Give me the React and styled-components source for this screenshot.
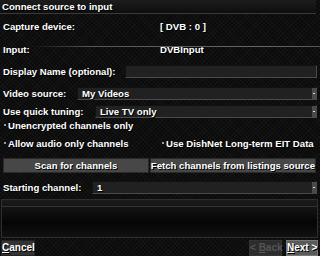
import React from 'react';
import styled, { createGlobalStyle } from 'styled-components';

const Global = createGlobalStyle`
    html, body {
        margin: 0;
        padding: 0;
        background: #000;
    }
    body {
        font-family: "Liberation Sans", Arial, sans-serif;
        font-weight: bold;
        font-size: 9.6px;
        color: #fff;
    }
`;

const Screen = styled.div`
    width: 320px;
    height: 256px;
    overflow: hidden;
    display: flex;
    flex-direction: column;
    background-color: #0b0b0b;
    background-image:
        repeating-linear-gradient(45deg, rgba(255,255,255,0.025) 0 1px, transparent 1px 3px),
        repeating-linear-gradient(-45deg, rgba(255,255,255,0.025) 0 1px, transparent 1px 3px);
    text-shadow: 1px 1px 0 #000;
`;

const Title = styled.div`
    height: 13px;
    line-height: 13px;
    padding-left: 2px;
    margin-right: 4px;
    border-bottom: 1px solid #3a3a3a;
    background: linear-gradient(#1c1c1c, #0e0e0e);
`;

const Body = styled.div`
    display: flex;
    flex-direction: column;
    padding: 0 3px;
`;

const Row = styled.div`
    height: ${p => p.h}px;
    display: flex;
    align-items: center;
    position: relative;
`;

const Label = styled.span`
    width: ${p => p.w ? `${p.w}px` : 'auto'};
    flex-shrink: 0;
    white-space: nowrap;
`;

const Value = styled.span`
    margin-left: ${p => p.ml || 0}px;
`;

const Sheen = styled.div`
    position: absolute;
    left: 27px;
    right: -3px;
    top: 8px;
    height: 1px;
    background: linear-gradient(90deg, transparent, #555 20%, #666 80%, #555);
`;

const Field = styled.div`
    flex: 1;
    height: 11px;
    display: flex;
    align-items: center;
    padding-left: 4px;
    background: #212121;
    border: 1px solid #111;
    border-bottom-color: #4a4a4a;
    border-right-color: #4a4a4a;
`;

const FieldText = styled.span`
    flex: 1;
`;

const Thumb = styled.div`
    width: 4px;
    height: 11px;
    background: #4a4a4a;
    display: flex;
    align-items: center;
    justify-content: center;
    &::after {
        content: '';
        width: 2px;
        height: 1px;
        background: #ddd;
    }
`;

const Check = styled.span`
    width: 2px;
    height: 2px;
    margin: 0 2px 0 1px;
    background: #999;
    flex-shrink: 0;
`;

const CheckHalf = styled.div`
    width: ${p => p.w}px;
    display: flex;
    align-items: center;
`;

const ButtonBar = styled.div`
    display: flex;
    gap: 1px;
    width: 313px;
`;

const WideButton = styled.div`
    flex: ${p => p.grow};
    height: 13px;
    line-height: 13px;
    text-align: center;
    background: #474747;
    border: 1px solid #2a2a2a;
    white-space: nowrap;
`;

const Box = styled.div`
    margin: 1px 2px 0 1px;
    height: 38px;
    border: 1px solid #2e2e2e;
    background: linear-gradient(#1b1b1b, #050505 60%, #111);
    display: flex;
    flex-direction: column;
    &::before {
        content: '';
        height: 6px;
        border-bottom: 1px solid #333;
    }
`;

const Footer = styled.div`
    display: flex;
    align-items: flex-end;
    margin-top: 2px;
    padding: 0 2px 0 1px;
    gap: 4px;
`;

const NavButton = styled.div`
    width: ${p => p.w}px;
    height: 14px;
    line-height: 14px;
    text-align: center;
    background: ${p => p.bg};
    color: ${p => p.fg || '#fff'};
    border: 1px solid ${p => p.bd || '#222'};
    text-shadow: ${p => p.dim ? 'none' : '1px 1px 0 #000'};
    white-space: nowrap;
    font-size: 10px;
    u { text-decoration: underline; }
`;

const Spacer = styled.div`
    flex: 1;
`;

export default function App() {
    return (
        <Screen>
            <Global />
            <Title>Connect source to input</Title>
            <Body>
                <Row h={24}>
                    <Label w={157}>Capture device:</Label>
                    <Value>[ DVB : 0 ]</Value>
                </Row>
                <Row h={22}>
                    <Sheen />
                    <Label w={157}>Input:</Label>
                    <Value>DVBInput</Value>
                </Row>
                <Row h={22}>
                    <Label w={122}>Display Name (optional):</Label>
                    <Field />
                </Row>
                <Row h={22}>
                    <Label w={74}>Video source:</Label>
                    <Field>
                        <FieldText>My Videos</FieldText>
                        <Thumb />
                    </Field>
                </Row>
                <Row h={14}>
                    <Label w={92}>Use quick tuning:</Label>
                    <Field>
                        <FieldText>Live TV only</FieldText>
                        <Thumb />
                    </Field>
                </Row>
                <Row h={14}>
                    <Check />
                    <Label>Unencrypted channels only</Label>
                </Row>
                <Row h={22}>
                    <CheckHalf w={158}>
                        <Check />
                        <Label>Allow audio only channels</Label>
                    </CheckHalf>
                    <CheckHalf w={155}>
                        <Check />
                        <Label>Use DishNet Long-term EIT Data</Label>
                    </CheckHalf>
                </Row>
                <Row h={22}>
                    <ButtonBar>
                        <WideButton grow={148}>Scan for channels</WideButton>
                        <WideButton grow={163}>Fetch channels from listings source</WideButton>
                    </ButtonBar>
                </Row>
                <Row h={22}>
                    <Label w={89}>Starting channel:</Label>
                    <Field>
                        <FieldText>1</FieldText>
                        <Thumb />
                    </Field>
                </Row>
            </Body>
            <Box />
            <Footer>
                <NavButton w={32} bg="#333"><u>C</u>ancel</NavButton>
                <Spacer />
                <NavButton w={31} bg="#2c2c2c" fg="#555" bd="#333" dim>&lt; <u>B</u>ack</NavButton>
                <NavButton w={30} bg="#5a5a5a" bd="#777"><u>N</u>ext &gt;</NavButton>
            </Footer>
        </Screen>
    );
}
